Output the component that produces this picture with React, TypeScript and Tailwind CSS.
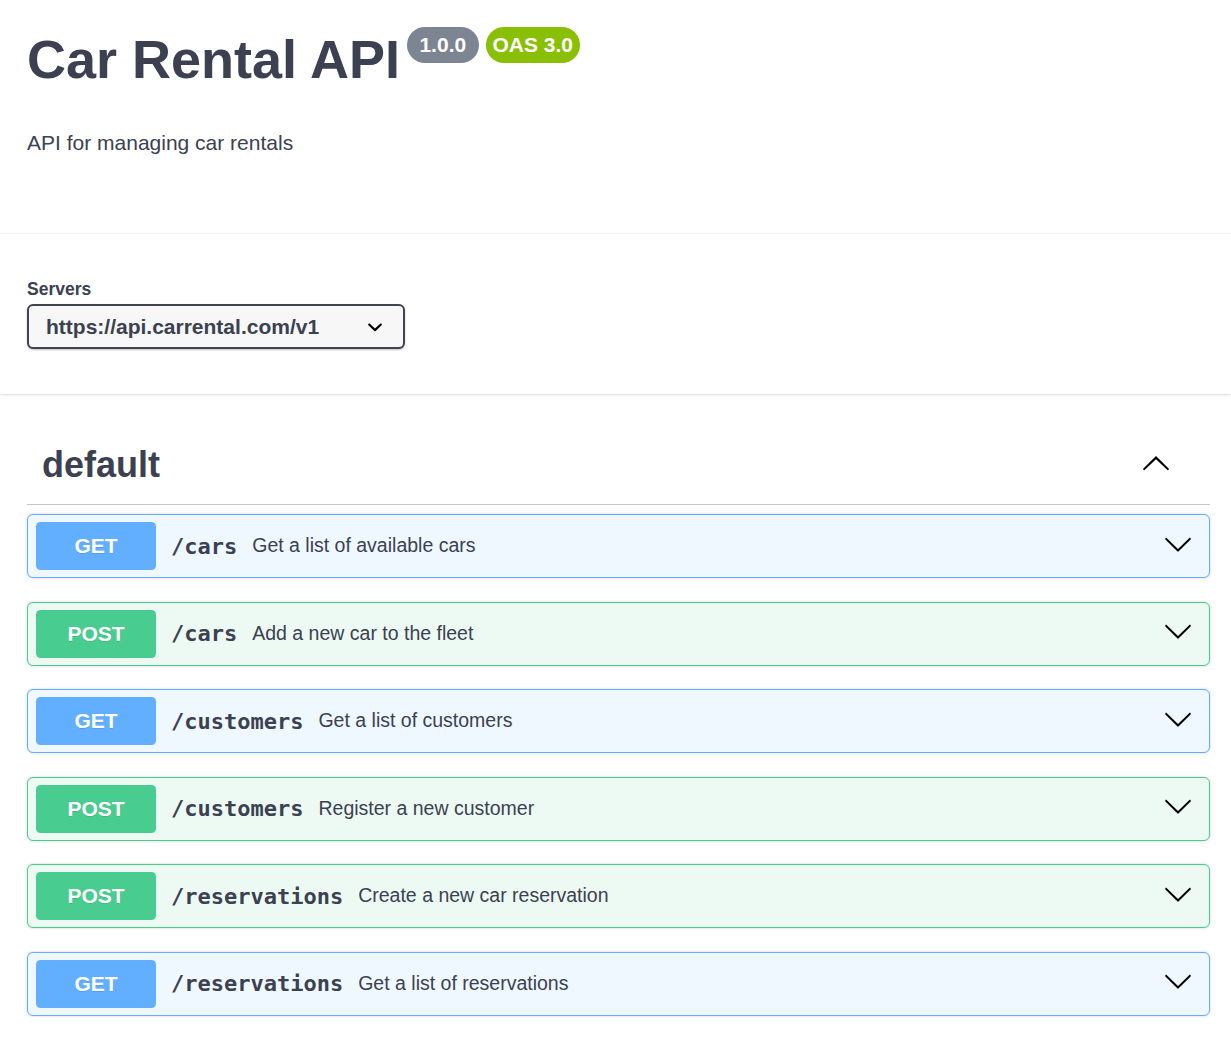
type Endpoint = { method: "GET" | "POST"; path: string; summary: string };

const endpoints: Endpoint[] = [
  { method: "GET", path: "/cars", summary: "Get a list of available cars" },
  { method: "POST", path: "/cars", summary: "Add a new car to the fleet" },
  { method: "GET", path: "/customers", summary: "Get a list of customers" },
  { method: "POST", path: "/customers", summary: "Register a new customer" },
  { method: "POST", path: "/reservations", summary: "Create a new car reservation" },
  { method: "GET", path: "/reservations", summary: "Get a list of reservations" },
];

// swagger's arrow, filled
const ARROW =
  "M17.418 6.109c.272-.268.709-.268.979 0s.271.701 0 .969l-7.908 7.83c-.27.268-.707.268-.979 0l-7.908-7.83c-.27-.268-.27-.701 0-.969.271-.268.709-.268.979 0L10 13.25l7.418-7.141z";

const Arrow = ({ up = false }: { up?: boolean }) => (
  <svg
    width="30"
    height="30"
    viewBox="0 0 20 20"
    className={up ? "rotate-180 shrink-0" : "shrink-0 mb-[5px]"}
  >
    <path d={ARROW} fill="#000" />
  </svg>
);

const OpBlock = ({ method, path, summary }: Endpoint) => {
  const isGet = method === "GET";
  return (
    <div
      className={
        "flex items-center h-[64px] mb-[23.5px] pl-[8px] pr-[16px] border rounded-[6px] shadow-[0_0_3px_rgba(0,0,0,0.19)] " +
        (isGet ? "bg-[#eff7ff] border-[#61affe]" : "bg-[#edfaf3] border-[#49cc90]")
      }
    >
      <div
        className={
          "w-[120px] h-[48px] rounded-[4.5px] flex items-center justify-center text-white font-bold text-[21px] [text-shadow:0_1px_0_rgba(0,0,0,0.1)] " +
          (isGet ? "bg-[#61affe]" : "bg-[#49cc90]")
        }
      >
        {method}
      </div>
      <span className="pl-[15px] pr-[15px] font-['DejaVu_Sans_Mono',monospace] font-bold text-[22px] text-[#3b4151]">
        {path}
      </span>
      <span className="flex-1 text-[19.5px] text-[#3b4151]">{summary}</span>
      <Arrow />
    </div>
  );
};

export default function App() {
  return (
    <div className="min-h-screen bg-white font-['Liberation_Sans',Arial,sans-serif] text-[#3b4151]">
      {/* info */}
      <div className="pl-[27px] pr-[21px] pt-[27px] pb-[78px]">
        <div className="flex items-start">
          <h1 className="text-[54px] leading-[64px] font-bold">Car Rental API</h1>
          <div className="flex items-start gap-[7px] ml-[7px]">
            <span className="rounded-full bg-[#7d8492] text-white font-bold text-[21px] leading-[24px] py-[6px] px-[6.5px] whitespace-pre">
              {" 1.0.0 "}
            </span>
            <span className="rounded-full bg-[#89bf04] text-white font-bold text-[21px] leading-[24px] py-[6px] px-[7px] whitespace-pre">
              OAS 3.0
            </span>
          </div>
        </div>
        <p className="mt-[40px] text-[21px] leading-[24px]">API for managing car rentals</p>
      </div>

      {/* servers */}
      <div className="bg-white border-t border-[#f4f4f4] shadow-[0_1px_2px_0_rgba(0,0,0,0.15)] pl-[27px] pr-[21px] pt-[44px] pb-[45px]">
        <div className="text-[17.5px] leading-[22px] font-bold mb-[4px]">Servers</div>
        <div className="w-[378px] h-[45px] flex items-center justify-between pl-[17px] pr-[13px] border-2 border-[#41444e] rounded-[6px] bg-[#f7f7f7] shadow-[0_1px_2px_0_rgba(0,0,0,0.25)]">
          <span className="text-[21px] font-bold">https://api.carrental.com/v1</span>
          <svg width="30" height="30" viewBox="0 0 20 20">
            <path
              d="M13.418 7.859a.695.695 0 01.978 0 .68.68 0 010 .969l-3.908 3.83a.697.697 0 01-.979 0l-3.908-3.83a.68.68 0 010-.969.695.695 0 01.978 0L10 11l3.418-3.141z"
              fill="#000"
            />
          </svg>
        </div>
      </div>

      {/* operations */}
      <div className="pl-[27px] pr-[21px] pt-[30px] pb-[20px]">
        <div className="h-[81px] flex items-center justify-between pl-[15px] pr-[39px] border-b border-[#c4c6cb]">
          <h3 className="text-[36px] font-bold leading-[41px]">default</h3>
          <Arrow up />
        </div>
        <div className="mt-[9px]">
          {endpoints.map((ep, i) => (
            <OpBlock key={i} {...ep} />
          ))}
        </div>
      </div>
    </div>
  );
}
